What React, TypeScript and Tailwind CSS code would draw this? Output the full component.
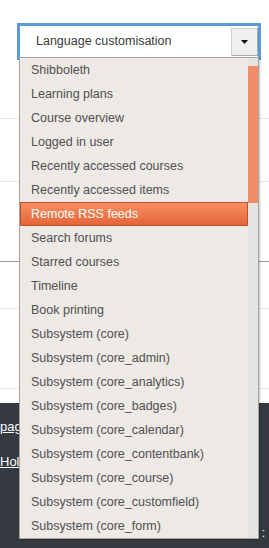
import React from "react";

const items = [
  "Shibboleth",
  "Learning plans",
  "Course overview",
  "Logged in user",
  "Recently accessed courses",
  "Recently accessed items",
  "Remote RSS feeds",
  "Search forums",
  "Starred courses",
  "Timeline",
  "Book printing",
  "Subsystem (core)",
  "Subsystem (core_admin)",
  "Subsystem (core_analytics)",
  "Subsystem (core_badges)",
  "Subsystem (core_calendar)",
  "Subsystem (core_contentbank)",
  "Subsystem (core_course)",
  "Subsystem (core_customfield)",
  "Subsystem (core_form)",
];

export default function App() {
  return (
    <div
      className="relative w-[269px] h-[548px] overflow-hidden bg-white flex flex-col"
      style={{ fontFamily: '"Liberation Sans", Arial, sans-serif' }}
    >
      {/* background page */}
      <div className="h-[119px] shrink-0 border-b border-[#e6e6e6] pt-[23px] pl-[17px]">
        <div className="w-[244px] h-[37px] border-[3px] border-[#5a9ad9] bg-white flex items-center">
          <div className="flex-1 pl-[16px] text-[12.5px] text-[#3a3a3a] leading-none">
            Language customisation
          </div>
          <div className="w-[27px] h-[28px] bg-[#efefef] border border-[#d0d0d0] border-r-[#a8a8a8] border-b-[#a8a8a8] flex items-center justify-center">
            <svg width="7" height="4" viewBox="0 0 7 4">
              <path d="M0 0H7L3.5 4Z" fill="#111" />
            </svg>
          </div>
        </div>
      </div>
      <div className="h-[63px] shrink-0 border-b border-[#e6e6e6]" />
      <div className="h-[80px] shrink-0 border-b border-[#9a9a9a]" />
      <div className="h-[47px] shrink-0 border-b border-[#e6e6e6]" />
      <div className="h-[80px] shrink-0 border-b border-[#e6e6e6]" />
      <div className="h-[14px] shrink-0" />
      <div className="flex-1 bg-[#343a40] text-white text-[13px] relative">
        <div className="pt-[16px] underline leading-[16px]">page</div>
        <div className="pt-[19px] underline leading-[16px]">Holder</div>
        <div className="absolute right-[4px] top-[124px] text-[12px] leading-none">:</div>
      </div>

      {/* dropdown list overlay */}
      <div className="absolute left-[19px] top-[57px] w-[240px] h-[482px] border border-[#a9a39d] bg-[#ede9e5] flex shadow-[1px_1px_2px_rgba(0,0,0,0.25)]">
        <div className="flex-1 flex flex-col">
          {items.map((it, i) =>
            i === 6 ? (
              <div
                key={it}
                className="h-[24px] shrink-0 flex items-center pl-[10px] text-[12.5px] text-white border border-[#c4502b] bg-gradient-to-b from-[#f68e5f] to-[#e4663a]"
              >
                {it}
              </div>
            ) : (
              <div
                key={it}
                className="h-[24px] shrink-0 flex items-center pl-[11px] text-[12.5px] text-[#505050]"
              >
                {it}
              </div>
            )
          )}
        </div>
        <div className="w-[10px] bg-[#e6e4e2] flex flex-col">
          <div className="mt-[8px] h-[137px] bg-[#f08d68]" />
        </div>
      </div>
    </div>
  );
}
